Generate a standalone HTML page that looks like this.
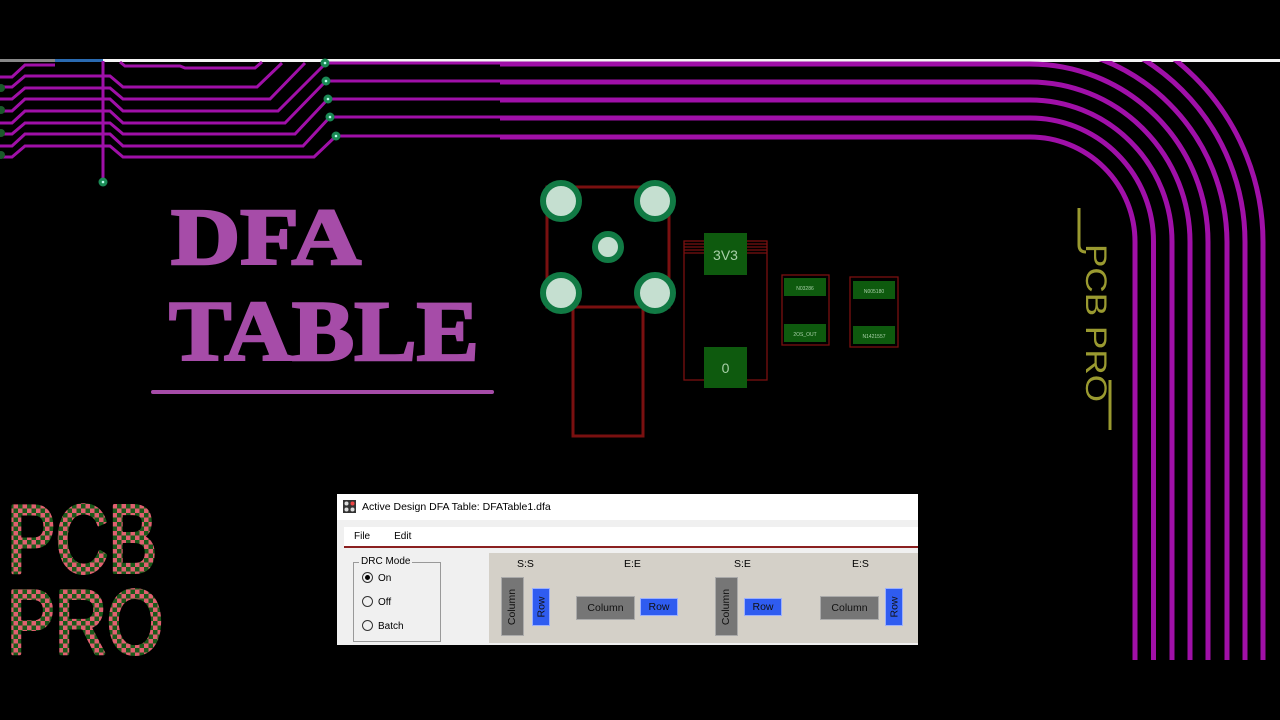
<!DOCTYPE html>
<html><head><meta charset="utf-8"><style>
html,body{margin:0;padding:0;background:#000;width:1280px;height:720px;overflow:hidden;font-family:"Liberation Sans",sans-serif}
svg{position:absolute;left:0;top:0}
.dlg{position:absolute;left:337px;top:494px;width:581px;height:151px;background:#f0f0f0;font-family:"Liberation Sans",sans-serif;font-size:10px;color:#000}
.tb{height:26px;background:#fff;line-height:26px;padding-left:25px;font-size:10.5px}
.menu{position:absolute;top:33px;left:7px;right:0;height:19px;background:#fff;border-bottom:2px solid #8b2020;font-size:10px;line-height:20px}
.menu span{margin-left:10px;margin-right:14px}
.grp{position:absolute;left:16px;top:68px;width:86px;height:78px;border:1px solid #999}
.grp .lg{position:absolute;top:-7px;left:5px;background:#f0f0f0;padding:0 2px}
.rad{position:absolute;left:8px;font-size:10px}
.rad i{display:inline-block;width:9px;height:9px;border:1px solid #333;border-radius:50%;vertical-align:-2px;margin-right:5px;position:relative}
.panel{position:absolute;left:152px;top:59px;width:429px;height:90px;background:#d4d0c8}
.b{position:absolute;color:#111;font-size:10.5px;display:flex;align-items:center;justify-content:center}
.g{background:#767676;border:1px solid #aaa}
.bl{background:#2f5cf0;border:1px solid #9bb0ff;color:#111}
.v span{transform:rotate(-90deg);white-space:nowrap}
.lab{position:absolute;top:5px;font-size:10.5px}
</style></head><body>
<svg width="1280" height="720" viewBox="0 0 1280 720">
<defs>
<pattern id="st" width="9" height="9" patternUnits="userSpaceOnUse"><rect width="9" height="9" fill="#e06070"/><rect width="4.5" height="4.5" fill="#1a5a1a"/><rect x="4.5" y="4.5" width="4.5" height="4.5" fill="#1a5a1a"/></pattern>
<clipPath id="cl"><rect x="0" y="61" width="1280" height="600"/></clipPath>
</defs>
<rect x="0" y="59" width="55" height="3" fill="#888"/>
<rect x="55" y="59" width="48" height="3" fill="#2a6ab0"/>
<rect x="103" y="59" width="1177" height="3" fill="#f4f4f4"/>
<g clip-path="url(#cl)" fill="none" stroke="#a010a8" stroke-width="4">
<g stroke-width="5">
<path d="M500 137 H1030 A105 105 0 0 1 1135 242 V660"/>
<path d="M500 118 H1030 A123.5 123.5 0 0 1 1153.5 242 V660"/>
<path d="M500 100 H1030 A142 142 0 0 1 1172 242 V660"/>
<path d="M500 82 H1030 A160 160 0 0 1 1190 242 V660"/>
<path d="M500 64 H1030 A178 178 0 0 1 1208 242 V660"/>
<path d="M1030 46 A197 197 0 0 1 1227 242 V660"/>
<path d="M1030 27 A215 215 0 0 1 1245 242 V660"/>
<path d="M1030 9 A233 233 0 0 1 1263 242 V660"/>
</g>
<g stroke-width="3">
<path d="M325 63 H500"/><path d="M326 81 H500"/><path d="M328 99 H500"/><path d="M330 117 H500"/><path d="M336 136 H500"/>
<path d="M0 77 H12 L25 65 H55"/>
<path d="M0 87 H12 L25 76 H110 L123 87 H257 L282 63"/>
<path d="M0 99 H12 L25 88 H110 L123 99 H270 L305 63"/>
<path d="M0 111 H12 L25 99 H110 L123 111 H278 L326 63"/>
<path d="M0 123 H12 L25 111 H110 L123 123 H285 L326 81"/>
<path d="M0 134 H12 L25 123 H110 L123 134 H295 L328 99"/>
<path d="M0 146 H12 L25 134 H110 L123 146 H303 L330 117"/>
<path d="M0 157 H12 L25 146 H110 L123 157 H314 L336 136"/>
<path d="M120 62 L125 66 H180 L185 68 H255 L262 62"/>
<path d="M103 60 V182"/>
</g>
</g>
<g fill="#1a8a55"><circle cx="103" cy="182" r="4.5"/><circle cx="325" cy="63" r="4.5"/><circle cx="326" cy="81" r="4.5"/><circle cx="328" cy="99" r="4.5"/><circle cx="330" cy="117" r="4.5"/><circle cx="336" cy="136" r="4.5"/>
<circle cx="1" cy="88" r="4" fill="#1a5a2a"/><circle cx="1" cy="110" r="4" fill="#1a5a2a"/><circle cx="1" cy="133" r="4" fill="#1a5a2a"/><circle cx="1" cy="155" r="4" fill="#1a5a2a"/></g>
<g fill="#bfe"><circle cx="103" cy="182" r="1.3"/><circle cx="325" cy="63" r="1.3"/><circle cx="326" cy="81" r="1.3"/><circle cx="328" cy="99" r="1.3"/><circle cx="330" cy="117" r="1.3"/><circle cx="336" cy="136" r="1.3"/></g>
<g fill="#a64ca8" stroke="#a64ca8" stroke-width="2.5" font-family="Liberation Serif, serif" font-weight="bold">
<text x="171" y="264" font-size="80" textLength="190" lengthAdjust="spacingAndGlyphs">DFA</text>
<text x="169" y="360" font-size="86" textLength="310" lengthAdjust="spacingAndGlyphs">TABLE</text>
</g>
<line x1="153" y1="392" x2="492" y2="392" stroke="#a64ca8" stroke-width="4" stroke-linecap="round"/>
<g fill="none" stroke="#7a1010" stroke-width="3">
<rect x="547" y="187" width="122" height="120"/>
<rect x="573" y="307" width="70" height="129"/>
</g>
<g stroke="#7a1010" stroke-width="1.3" fill="none">
<rect x="684" y="241" width="83" height="139"/>
<line x1="684" y1="244" x2="767" y2="244"/><line x1="684" y1="247" x2="767" y2="247"/><line x1="684" y1="250" x2="767" y2="250"/><line x1="684" y1="253" x2="767" y2="253"/>
<rect x="782" y="275" width="47" height="70"/>
<rect x="850" y="277" width="48" height="70"/>
</g>
<g fill="#c5dfd0" stroke="#117a44" stroke-width="6">
<circle cx="561" cy="201" r="18"/><circle cx="655" cy="201" r="18"/><circle cx="561" cy="293" r="18"/><circle cx="655" cy="293" r="18"/><circle cx="608" cy="247" r="13"/>
</g>
<g fill="#0e5a0e">
<rect x="704" y="233" width="43" height="42"/><rect x="704" y="347" width="43" height="41"/>
<rect x="784" y="278" width="42" height="18"/><rect x="784" y="324" width="42" height="18"/>
<rect x="853" y="281" width="42" height="18"/><rect x="853" y="326" width="42" height="18"/>
</g>
<g fill="#a8d0a8" font-family="Liberation Sans, sans-serif" text-anchor="middle">
<text x="725.5" y="260" font-size="14">3V3</text><text x="725.5" y="373" font-size="14">0</text>
<text x="805" y="290" font-size="5">N03286</text><text x="805" y="336" font-size="5">2OS_OUT</text>
<text x="874" y="293" font-size="5">N005180</text><text x="874" y="338" font-size="5">N1421557</text>
</g>
<g stroke="#9a9a30" stroke-width="3" fill="none">
<path d="M1079 208 V245 Q1079 252 1086 252"/>
<path d="M1110 380 V430"/>
</g>
<text transform="translate(1086 244) rotate(90)" fill="#9a9a30" font-family="Liberation Sans, sans-serif" font-size="30" textLength="158" lengthAdjust="spacingAndGlyphs">PCB PRO</text>
<g font-family="Liberation Sans, sans-serif" fill="url(#st)" stroke="url(#st)" stroke-width="4" stroke-linejoin="round">
<text x="7" y="572" font-size="96" textLength="150" lengthAdjust="spacingAndGlyphs">PCB</text>
<text x="7" y="653" font-size="90" textLength="156" lengthAdjust="spacingAndGlyphs">PRO</text>
</g>
</svg>
<div class="dlg">
<div class="tb"><svg width="13" height="13" style="left:6px;top:6px" viewBox="0 0 13 13"><rect width="13" height="13" fill="#333"/><circle cx="3.5" cy="3.5" r="2" fill="#ddd"/><circle cx="9.5" cy="3.5" r="2" fill="#e44"/><circle cx="3.5" cy="9.5" r="2" fill="#ddd"/><circle cx="9.5" cy="9.5" r="2" fill="#ddd"/></svg>Active Design DFA Table: DFATable1.dfa</div>
<div class="menu"><span>File</span><span>Edit</span></div>
<div class="grp"><span class="lg">DRC Mode</span>
<div class="rad" style="top:9px"><i><b style="position:absolute;left:2px;top:2px;width:5px;height:5px;border-radius:50%;background:#000"></b></i>On</div>
<div class="rad" style="top:33px"><i></i>Off</div>
<div class="rad" style="top:57px"><i></i>Batch</div>
</div>
<div class="panel">
<div class="lab" style="left:28px">S:S</div><div class="lab" style="left:135px">E:E</div><div class="lab" style="left:245px">S:E</div><div class="lab" style="left:363px">E:S</div>
<div class="b g v" style="left:12px;top:24px;width:21px;height:57px"><span>Column</span></div>
<div class="b bl v" style="left:43px;top:35px;width:16px;height:36px"><span>Row</span></div>
<div class="b g" style="left:87px;top:43px;width:57px;height:22px">Column</div>
<div class="b bl" style="left:151px;top:45px;width:36px;height:16px">Row</div>
<div class="b g v" style="left:226px;top:24px;width:21px;height:57px"><span>Column</span></div>
<div class="b bl" style="left:255px;top:45px;width:36px;height:16px">Row</div>
<div class="b g" style="left:331px;top:43px;width:57px;height:22px">Column</div>
<div class="b bl v" style="left:396px;top:35px;width:16px;height:36px"><span>Row</span></div>
</div>
</div>
</body></html>
